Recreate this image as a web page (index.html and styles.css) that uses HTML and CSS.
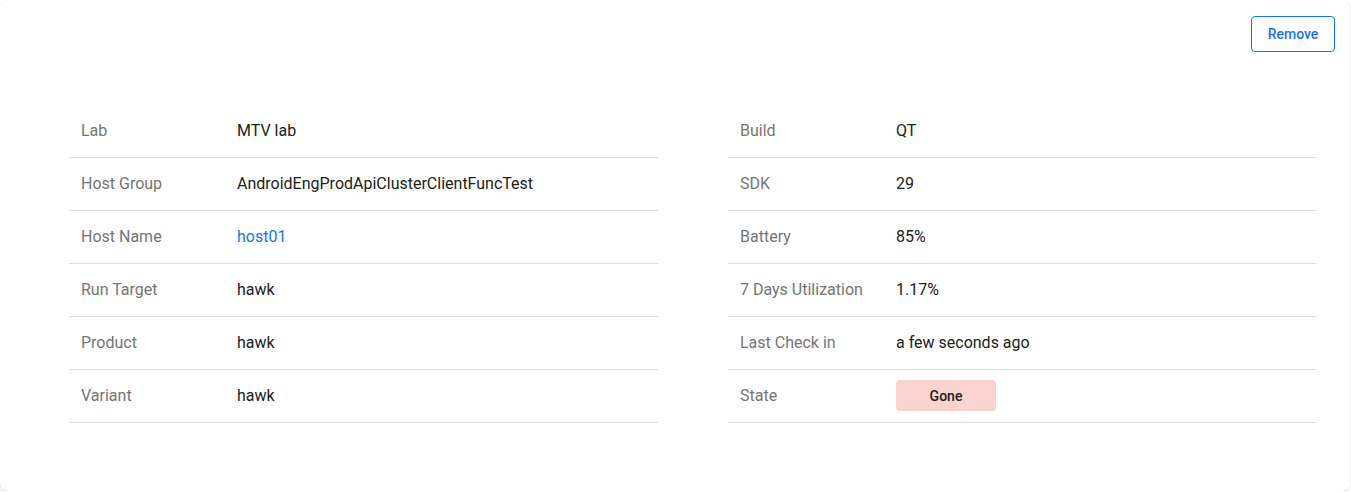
FILE: index.html
```html
<!DOCTYPE html>
<html>
<head>
<meta charset="utf-8">
<link rel="stylesheet" href="styles.css">
</head>
<body>
<div class="card">
  <div class="actions">
    <button class="btn-outline">Remove</button>
  </div>
  <div class="details">
    <table class="info">
      <tr><td class="label">Lab</td><td class="value">MTV lab</td></tr>
      <tr><td class="label">Host Group</td><td class="value">AndroidEngProdApiClusterClientFuncTest</td></tr>
      <tr><td class="label">Host Name</td><td class="value"><a class="link" href="#">host01</a></td></tr>
      <tr><td class="label">Run Target</td><td class="value">hawk</td></tr>
      <tr><td class="label">Product</td><td class="value">hawk</td></tr>
      <tr><td class="label">Variant</td><td class="value">hawk</td></tr>
    </table>
    <table class="info">
      <tr><td class="label">Build</td><td class="value">QT</td></tr>
      <tr><td class="label">SDK</td><td class="value">29</td></tr>
      <tr><td class="label">Battery</td><td class="value">85%</td></tr>
      <tr><td class="label">7 Days Utilization</td><td class="value">1.17%</td></tr>
      <tr><td class="label">Last Check in</td><td class="value">a few seconds ago</td></tr>
      <tr><td class="label">State</td><td class="value"><span class="state">Gone</span></td></tr>
    </table>
  </div>
</div>
</body>
</html>
```
FILE: styles.css
```css
* { box-sizing: border-box; }
html, body { margin: 0; padding: 0; background: #ffffff; }
body { font-family: Roboto, "Noto Sans", Arial, sans-serif; }

.card {
  width: 1350px;
  height: 491px;
  background: #fff;
  border-radius: 8px;
  box-shadow: 0 1px 2px rgba(0,0,0,0.12), 0 1px 3px rgba(0,0,0,0.06);
  padding: 16px 15px 0 69px;
}

.actions {
  display: flex;
  justify-content: flex-end;
}

.btn-outline {
  height: 36px;
  width: 84px;
  border: 1px solid #1a73e8;
  border-radius: 4px;
  background: #fff;
  color: #1a73e8;
  font-family: Roboto, Arial, sans-serif;
  font-weight: 500;
  font-size: 14px;
  padding: 0;
  cursor: pointer;
}

.details {
  display: grid;
  grid-template-columns: 589px 588px;
  column-gap: 70px;
  margin-top: 52px;
}

.info {
  border-collapse: collapse;
  width: 100%;
}

.info td {
  height: 53px;
  border-bottom: 1px solid #e0e0e0;
  font-size: 16px;
  padding: 0;
  vertical-align: middle;
}

.info .label {
  width: 168px;
  padding-left: 12px;
  color: #757575;
}

.info .value {
  color: #212121;
}

.link {
  color: #1a73e8;
  text-decoration: none;
}

.state {
  display: inline-flex;
  align-items: center;
  justify-content: center;
  width: 100px;
  height: 31px;
  background: #fad2cf;
  border-radius: 4px;
  font-size: 14px;
  font-weight: 500;
  color: #202124;
}
```
